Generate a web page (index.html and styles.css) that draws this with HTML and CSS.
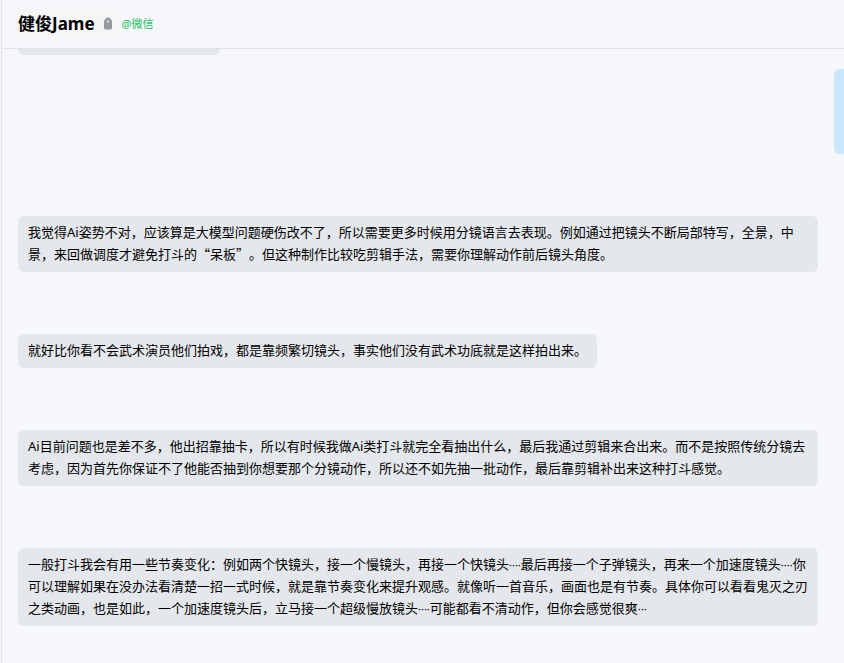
FILE: index.html
```
<!DOCTYPE html>
<html lang="zh-CN">
<head>
    <meta charset="UTF-8">
    <meta name="viewport" content="width=device-width, initial-scale=1.0">
    <title>健俊Jame</title>
    <link rel="stylesheet" href="styles.css">
</head>
<body>
    <div class="chat">
        <header class="chat-header">
            <div class="chat-title">
                <h1 class="chat-name">健俊Jame</h1>
                <svg class="tag-icon" viewBox="0 0 8 13" aria-hidden="true">
                    <path d="M2.8 0.5 H5.2 L8 3.5 V11 Q8 12.5 6.5 12.5 H1.5 Q0 12.5 0 11 V3.5 Z" fill="#969a9e"/>
                    <circle cx="4" cy="4.5" r="1" fill="#f5f5f5"/>
                </svg>
            </div>
            <span class="chat-source">@微信</span>
        </header>
        <main class="messages">
            <div class="bubble bubble-cut"></div>
            <div class="row-self">
                <div class="bubble-self"></div>
            </div>
            <div class="bubble">我觉得Ai姿势不对，应该算是大模型问题硬伤改不了，所以需要更多时候用分镜语言去表现。例如通过把镜头不断局部特写，全景，中景，来回做调度才避免打斗的<span class="quote">“呆板”</span>。但这种制作比较吃剪辑手法，需要你理解动作前后镜头角度。</div>
            <div class="bubble">就好比你看不会武术演员他们拍戏，都是靠频繁切镜头，事实他们没有武术功底就是这样拍出来。</div>
            <div class="bubble">Ai目前问题也是差不多，他出招靠抽卡，所以有时候我做Ai类打斗就完全看抽出什么，最后我通过剪辑来合出来。而不是按照传统分镜去考虑，因为首先你保证不了他能否抽到你想要那个分镜动作，所以还不如先抽一批动作，最后靠剪辑补出来这种打斗感觉。</div>
            <div class="bubble">一般打斗我会有用一些节奏变化：例如两个快镜头，接一个慢镜头，再接一个快镜头<span class="dots">····</span>最后再接一个子弹镜头，再来一个加速度镜头<span class="dots">····</span>你可以理解如果在没办法看清楚一招一式时候，就是靠节奏变化来提升观感。就像听一首音乐，画面也是有节奏。具体你可以看看鬼灭之刃之类动画，也是如此，一个加速度镜头后，立马接一个超级慢放镜头<span class="dots">····</span>可能都看不清动作，但你会感觉很爽<span class="dots">···</span></div>
        </main>
    </div>
</body>
</html>
```
FILE: styles.css
```
* {
    box-sizing: border-box;
}
body {
    margin: 0;
    padding-left: 1px;
    font-family: "Noto Sans", "Noto Sans CJK SC", sans-serif;
    background-color: #f5f7fb;
    color: #000;
}
.chat {
    min-height: 100vh;
    border-left: 1px solid #e1e3e8;
}
.chat-header {
    display: flex;
    align-items: center;
    height: 49px;
    padding: 0 14px 2px;
    border-bottom: 1px solid #e1e3e8;
}
.chat-title {
    display: flex;
    align-items: center;
    padding: 1px 6px 1px 2px;
    background-color: #f5f5f5;
}
.chat-name {
    margin: 0 9px 0 0;
    font-size: 17px;
    line-height: 25px;
}
.tag-icon {
    width: 8px;
    height: 13px;
}
.chat-source {
    margin-left: 4px;
    font-size: 11px;
    color: #1dbf5e;
}
.messages {
    display: flex;
    flex-direction: column;
    align-items: flex-start;
    padding: 0 26px 37px 16px;
}
.bubble {
    margin-bottom: 62px;
    padding: 5px 10px 7px;
    border-radius: 6px;
    background-color: #e4e7eb;
    font-size: 13px;
    line-height: 22px;
    text-spacing-trim: space-all;
}
.bubble:last-child {
    margin-bottom: 0;
}
.bubble-cut {
    width: 202px;
    height: 6px;
    margin-bottom: 14px;
    padding: 0;
    border-radius: 0 0 6px 6px;
}
.quote {
    font-family: "Noto Sans CJK SC", sans-serif;
    line-height: 1;
}
.dots {
    font-family: "Noto Sans", sans-serif;
    font-size: 11px;
    line-height: 1;
}
.row-self {
    display: flex;
    justify-content: flex-end;
    align-self: stretch;
    margin: 0 -26px 62px 0;
}
.bubble-self {
    width: 10px;
    height: 85px;
    border-radius: 6px 0 0 6px;
    background-color: #c9e7ff;
}
```
